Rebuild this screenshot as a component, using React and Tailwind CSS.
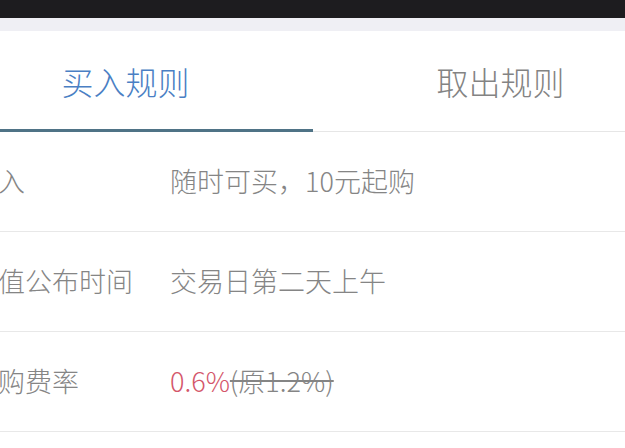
const rows = [
  { label: "买入", value: <span>随时可买，10元起购</span> },
  { label: "净值公布时间", value: <span>交易日第二天上午</span> },
  {
    label: "申购费率",
    value: (
      <span>
        <span className="text-[#d4566a]">0.6%</span>
        <span className="line-through">(原1.2%)</span>
      </span>
    ),
  },
  { label: "", value: null },
];

export default function App() {
  return (
    <div
      className="w-[625px] h-[448px] overflow-hidden bg-white font-light"
      style={{ fontFamily: '"Noto Sans CJK SC", "Noto Sans", sans-serif' }}
    >
      <div className="h-[18px] bg-[#1d1c1f]" />
      <div className="h-[13px] bg-[#efeff4]" />

      <div className="w-[750px] -ml-[62px]">
        {/* tabs */}
        <div className="flex h-[101px] border-b border-[#e6e6e6]">
          <div className="relative flex-1 flex items-center justify-center text-[32px] text-[#4a7fc4]">
            买入规则
            <div className="absolute left-0 right-0 -bottom-px h-[3px] bg-[#4f7386]" />
          </div>
          <div className="flex-1 flex items-center justify-center text-[32px] text-[#838383]">
            取出规则
          </div>
        </div>

        {/* rules */}
        {rows.map((row, i) => (
          <div
            key={i}
            className="flex items-center h-[100px] pl-[33px] border-b border-[#e8e8e8] text-[27px] text-[#858585]"
          >
            <div className="w-[199px] shrink-0">{row.label}</div>
            <div>{row.value}</div>
          </div>
        ))}
      </div>
    </div>
  );
}
